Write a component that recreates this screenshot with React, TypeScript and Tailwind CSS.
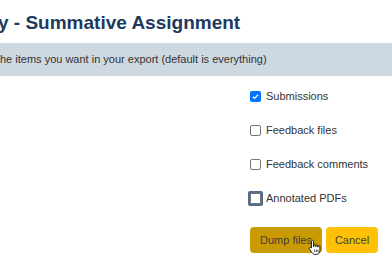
import React from 'react';

type Item = { label: string; checked?: boolean; focused?: boolean };

const items: Item[] = [
  { label: 'Submissions', checked: true },
  { label: 'Feedback files' },
  { label: 'Feedback comments' },
  { label: 'Annotated PDFs', focused: true },
];

const Box = ({ checked, focused }: { checked?: boolean; focused?: boolean }) => {
  if (checked) {
    return (
      <span className="flex h-[11px] w-[11px] items-center justify-center rounded-[2px] bg-[#0075ff]">
        <svg viewBox="0 0 12 12" className="h-[9px] w-[9px]">
          <path d="M2.5 6.2l2.3 2.3 4.7-5" fill="none" stroke="#fff" strokeWidth="1.8" />
        </svg>
      </span>
    );
  }
  if (focused) {
    return (
      <span className="flex h-[15px] w-[15px] items-center justify-center rounded-[2px] bg-[#4f6d8c]">
        <span className="h-[11px] w-[11px] rounded-[1px] border border-[#767676] bg-white" />
      </span>
    );
  }
  return <span className="h-[11px] w-[11px] rounded-[2px] border border-[#767676] bg-white" />;
};

const HandCursor = () => (
  <svg viewBox="0 0 16 20" className="absolute left-[58px] top-[12px] h-[17px] w-[14px]">
    <path
      d="M5 1.5c.8 0 1.3.6 1.3 1.4V9h.4V7.6c0-.7.5-1.1 1.1-1.1s1.1.4 1.1 1.1V9h.3V8.3c0-.7.5-1.1 1.1-1.1s1.1.4 1.1 1.1V9.5h.3V9c0-.7.5-1 1-1s1.1.4 1.1 1.1v4.3c0 2.6-1.6 4.8-4.2 4.8H8.2c-1.5 0-2.6-.7-3.5-1.9L1.6 12c-.5-.7-.3-1.5.3-1.9.6-.4 1.3-.2 1.8.4l.1.1V2.9c0-.8.5-1.4 1.2-1.4z"
      fill="#fff"
      stroke="#111"
      strokeWidth="1.1"
    />
    <path d="M7.6 12.5v3M9.6 12.5v3M11.6 12.5v3" stroke="#111" strokeWidth="0.9" />
  </svg>
);

export default function App() {
  return (
    <div className="h-[272px] w-[392px] overflow-hidden bg-white font-['Liberation_Sans',Arial,sans-serif]">
      <h2 className="ml-[-2px] whitespace-nowrap pt-[12px] text-[19px] font-bold leading-[22px] text-[#1d3a5e]">
        y - Summative Assignment
      </h2>
      <div className="mt-[9px] flex h-[33px] items-center whitespace-nowrap bg-[#ced8e1] text-[11px] text-[#333]">
        he items you want in your export (default is everything)
      </div>
      <div className="flex flex-col pl-[250px] pt-[3px] text-[11px] text-[#333]">
        {items.map((item) => (
          <label
            key={item.label}
            className={item.focused ? 'flex h-[34px] items-center gap-[3px]' : 'flex h-[34px] items-center gap-[5px]'}
          >
            <span className={item.focused ? 'ml-[-2px] flex' : 'flex'}>
              <Box checked={item.checked} focused={item.focused} />
            </span>
            <span>{item.label}</span>
          </label>
        ))}
        <div className="relative mt-[12px] flex gap-[4px]">
          <button className="h-[26px] w-[72px] rounded-[4px] bg-[#c99b00] text-[11px] text-[#3d3d3d]">
            Dump files
          </button>
          <button className="h-[26px] w-[52px] rounded-[4px] bg-[#ffc107] text-[11px] text-[#3d3d3d]">
            Cancel
          </button>
          <HandCursor />
        </div>
      </div>
    </div>
  );
}
